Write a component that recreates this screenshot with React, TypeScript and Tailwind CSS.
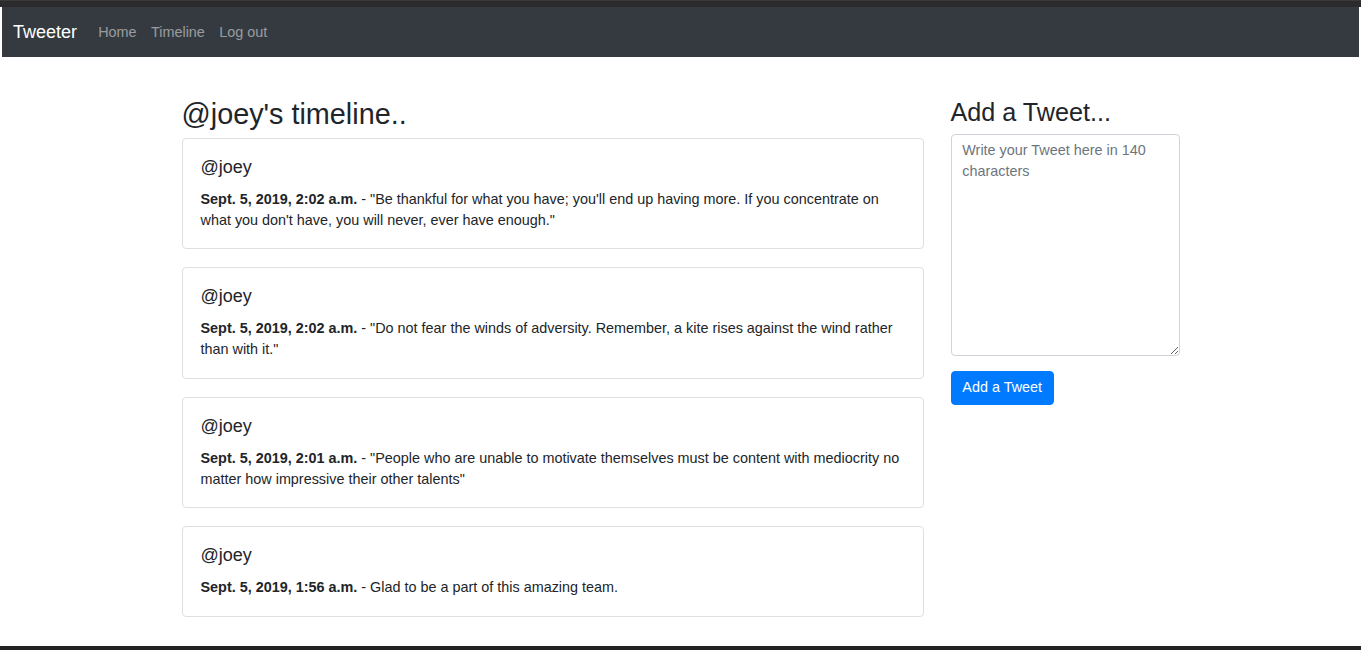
import React from 'react';

const tweets = [
  {
    user: '@joey',
    date: 'Sept. 5, 2019, 2:02 a.m.',
    text: '"Be thankful for what you have; you\'ll end up having more. If you concentrate on what you don\'t have, you will never, ever have enough."',
  },
  {
    user: '@joey',
    date: 'Sept. 5, 2019, 2:02 a.m.',
    text: '"Do not fear the winds of adversity. Remember, a kite rises against the wind rather than with it."',
  },
  {
    user: '@joey',
    date: 'Sept. 5, 2019, 2:01 a.m.',
    text: '"People who are unable to motivate themselves must be content with mediocrity no matter how impressive their other talents"',
  },
  {
    user: '@joey',
    date: 'Sept. 5, 2019, 1:56 a.m.',
    text: 'Glad to be a part of this amazing team.',
  },
];

const App = () => {
  return (
    <div className="w-full h-[650px] bg-white flex flex-col overflow-hidden text-[#212529] font-['Liberation_Sans',Arial,sans-serif]">
      {/* window chrome strip */}
      <div className="h-[7px] bg-[#2b2b2b] border-t border-[#3a3a3a]" />

      <div className="flex-1 flex flex-col px-[2px]">
        {/* Navbar */}
        <nav className="h-[50px] bg-[#343a40] flex items-center pl-[11px] pt-[1px]">
          <span className="text-white text-[18px] leading-[27px] mr-[14px]">Tweeter</span>
          <ul className="flex items-center">
            <li><a className="block px-[7.2px] text-[14.4px] text-white/50">Home</a></li>
            <li><a className="block px-[7.2px] text-[14.4px] text-white/50">Timeline</a></li>
            <li><a className="block px-[7.2px] text-[14.4px] text-white/50">Log out</a></li>
          </ul>
        </nav>

        {/* Content */}
        <main className="flex-1 pt-[40px]">
          <div className="w-[998px] mx-auto flex gap-[27px]">
            <section className="w-[742px]">
              <h2 className="text-[28.8px] leading-[34.5px] mb-[6.5px]">@joey's timeline..</h2>
              <div className="flex flex-col gap-[18px]">
                {tweets.map((t, i) => (
                  <div key={i} className="border border-[#dfdfdf] rounded-[4px] px-[18px] pt-[18px] pb-[17.4px]">
                    <h5 className="text-[18px] leading-[21px] mb-[11px]">{t.user}</h5>
                    <p className="text-[14.4px] leading-[21px]">
                      <b className="font-bold">{t.date}</b> - {t.text}
                    </p>
                  </div>
                ))}
              </div>
            </section>

            <aside className="w-[229px]">
              <h3 className="text-[25.2px] leading-[30.2px] mb-[7px]">Add a Tweet...</h3>
              <textarea
                placeholder="Write your Tweet here in 140 characters"
                className="block w-full h-[222px] border border-[#ced4da] rounded-[4px] px-[10.8px] py-[5px] text-[14.4px] leading-[21px] text-[#495057] placeholder:text-[#6c757d] outline-none"
              />
              <button className="mt-[14.6px] bg-[#007bff] text-white text-[14.4px] leading-[21.6px] px-[10.8px] py-[5.4px] rounded-[4px] border border-[#007bff]">
                Add a Tweet
              </button>
            </aside>
          </div>
        </main>
      </div>

      <div className="h-[4px] bg-[#222]" />
    </div>
  );
};

export default App;
